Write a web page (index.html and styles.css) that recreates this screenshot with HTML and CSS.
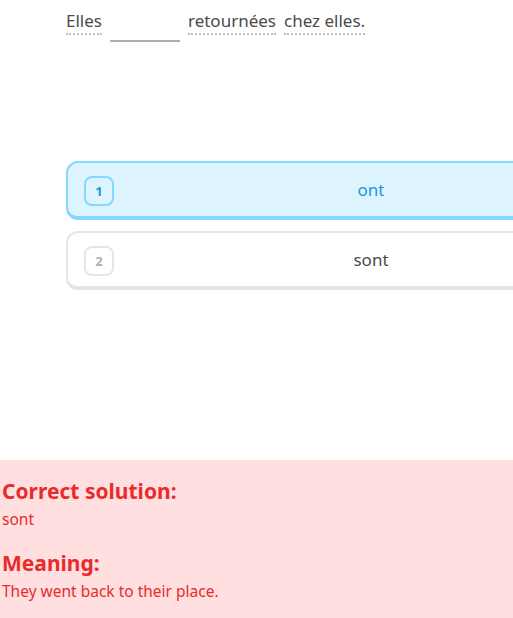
FILE: index.html
```html
<!DOCTYPE html>
<html>
<head>
<meta charset="utf-8">
<link rel="stylesheet" href="styles.css">
</head>
<body>
<div class="page">
  <div class="sentence">
    <span class="word">Elles</span>
    <span class="blank"></span>
    <span class="word">retournées</span>
    <span class="word">chez elles.</span>
  </div>
  <div class="choices">
    <div class="choice selected">
      <span class="num">1</span>
      <span class="label">ont</span>
    </div>
    <div class="choice">
      <span class="num">2</span>
      <span class="label">sont</span>
    </div>
  </div>
</div>
<div class="feedback">
  <h2 class="fb-title">Correct solution:</h2>
  <p class="fb-text">sont</p>
  <h2 class="fb-title second">Meaning:</h2>
  <p class="fb-text">They went back to their place.</p>
</div>
</body>
</html>
```
FILE: styles.css
```css
html, body {
  margin: 0;
  padding: 0;
  background: #fff;
  overflow: hidden;
  width: 513px;
  height: 618px;
}
body {
  font-family: "Noto Sans", sans-serif;
  color: #4b4b4b;
}
.page {
  height: 460px;
  padding-left: 66px;
  box-sizing: border-box;
  overflow: hidden;
}
.sentence {
  display: flex;
  align-items: flex-start;
  gap: 8px;
  padding-top: 10px;
  font-size: 17px;
  line-height: 22px;
}
.word {
  border-bottom: 2px dotted #bdbdbd;
  padding-bottom: 1px;
}
.blank {
  width: 70px;
  height: 30px;
  border-bottom: 2px solid #afafaf;
}
.choices {
  margin-top: 119px;
  display: flex;
  flex-direction: column;
  gap: 11px;
  width: 610px;
}
.choice {
  position: relative;
  display: flex;
  align-items: center;
  justify-content: center;
  height: 53px;
  border: 2px solid #e5e5e5;
  border-bottom-width: 4px;
  border-radius: 12px;
  background: #fff;
}
.choice.selected {
  background: #ddf4ff;
  border-color: #84d8ff;
}
.num {
  position: absolute;
  left: 16px;
  top: 13px;
  width: 26px;
  height: 26px;
  border: 2px solid #e5e5e5;
  border-radius: 8px;
  display: flex;
  align-items: center;
  justify-content: center;
  font-size: 13px;
  font-weight: 700;
  color: #afafaf;
}
.selected .num {
  border-color: #84d8ff;
  color: #1899d6;
}
.label {
  font-size: 17px;
  color: #4b4b4b;
}
.selected .label {
  color: #1899d6;
}
.feedback {
  background: #ffdfe0;
  height: 158px;
  padding: 18px 2px 0;
  box-sizing: border-box;
  color: #ea2b2b;
}
.fb-title {
  margin: 0;
  font-size: 21px;
  line-height: 26px;
  font-weight: 700;
}
.fb-title.second {
  margin-top: 20px;
}
.fb-text {
  margin: 4px 0 0;
  font-size: 15.5px;
  line-height: 22px;
}
```
